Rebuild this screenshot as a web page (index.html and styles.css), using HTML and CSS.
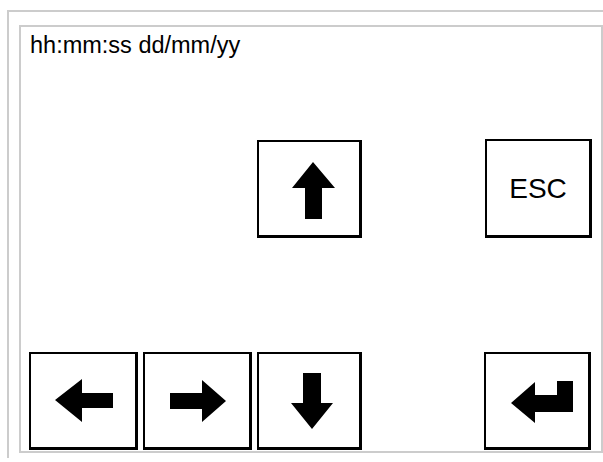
FILE: index.html
```html
<!DOCTYPE html>
<html>
<head>
<meta charset="utf-8">
<link rel="stylesheet" href="styles.css">
</head>
<body>
<div class="frame">
  <div class="screen">
    <div class="clock">hh:mm:ss dd/mm/yy</div>
    <div class="row row-top">
      <div class="key key-narrow key-up">
        <svg viewBox="0 0 100 93" width="100" height="93"><polygon points="54,20 76,46 63,46 63,77 46,77 46,46 33,46"/></svg>
      </div>
      <div class="key key-esc"><span>ESC</span></div>
    </div>
    <div class="row row-bottom">
      <div class="key key-wide">
        <svg viewBox="0 0 104 93" width="104" height="93"><polygon points="24,46 51,25 51,39 82,39 82,54 51,54 51,68"/></svg>
      </div>
      <div class="key key-wide">
        <svg viewBox="0 0 104 93" width="104" height="93"><polygon points="25,39 57,39 57,26 81,47 57,68 57,55 25,55"/></svg>
      </div>
      <div class="key key-narrow">
        <svg viewBox="0 0 100 93" width="100" height="93"><polygon points="44,19 62,19 62,49 74,49 53,75 32,49 44,49"/></svg>
      </div>
      <div class="key key-enter">
        <svg viewBox="0 0 102 93" width="102" height="93"><polygon points="25,49 49,28 49,41 71,41 71,27 87,27 87,58 49,58 49,69"/></svg>
      </div>
    </div>
  </div>
</div>
</body>
</html>
```

FILE: styles.css
```css
html, body {
  margin: 0;
  padding: 0;
  background: #ffffff;
}

body {
  font-family: "Liberation Sans", Arial, sans-serif;
  color: #000000;
  width: 603px;
  height: 462px;
  overflow: hidden;
}

.frame {
  margin: 10px 0 0 7px;
  border-top: 2px solid #cccccc;
  border-left: 2px solid #cccccc;
  padding: 13px 0 0 10px;
  height: 448px;
  box-sizing: border-box;
  width: 596px;
}

.screen {
  box-sizing: border-box;
  width: 584px;
  height: 428px;
  border: 2px solid #cccccc;
}

.clock {
  font-size: 23.5px;
  line-height: 26px;
  height: 26px;
  padding: 5px 0 0 9px;
  white-space: nowrap;
}

.row {
  display: flex;
  align-items: flex-start;
}

.row-top {
  margin-top: 82px;
  padding-left: 236px;
  gap: 123px;
}

.row-bottom {
  margin-top: 114px;
  padding-left: 8px;
  gap: 5px;
}

.row-bottom .key-enter {
  margin-left: 117px;
}

.key {
  box-sizing: border-box;
  height: 98px;
  border-style: solid;
  border-color: #000000;
  border-width: 2px 3px 3px 2px;
  background: #ffffff;
  display: flex;
  align-items: center;
  justify-content: center;
}

.key svg {
  display: block;
  fill: #000000;
}

.key-wide {
  width: 109px;
}

.key-narrow {
  width: 105px;
}

.key-esc {
  width: 107px;
  margin-top: -1px;
  height: 99px;
  font-size: 28px;
}

.key-esc span {
  display: block;
  line-height: 1;
  padding-top: 1px;
}

.key-enter {
  width: 107px;
}
```
